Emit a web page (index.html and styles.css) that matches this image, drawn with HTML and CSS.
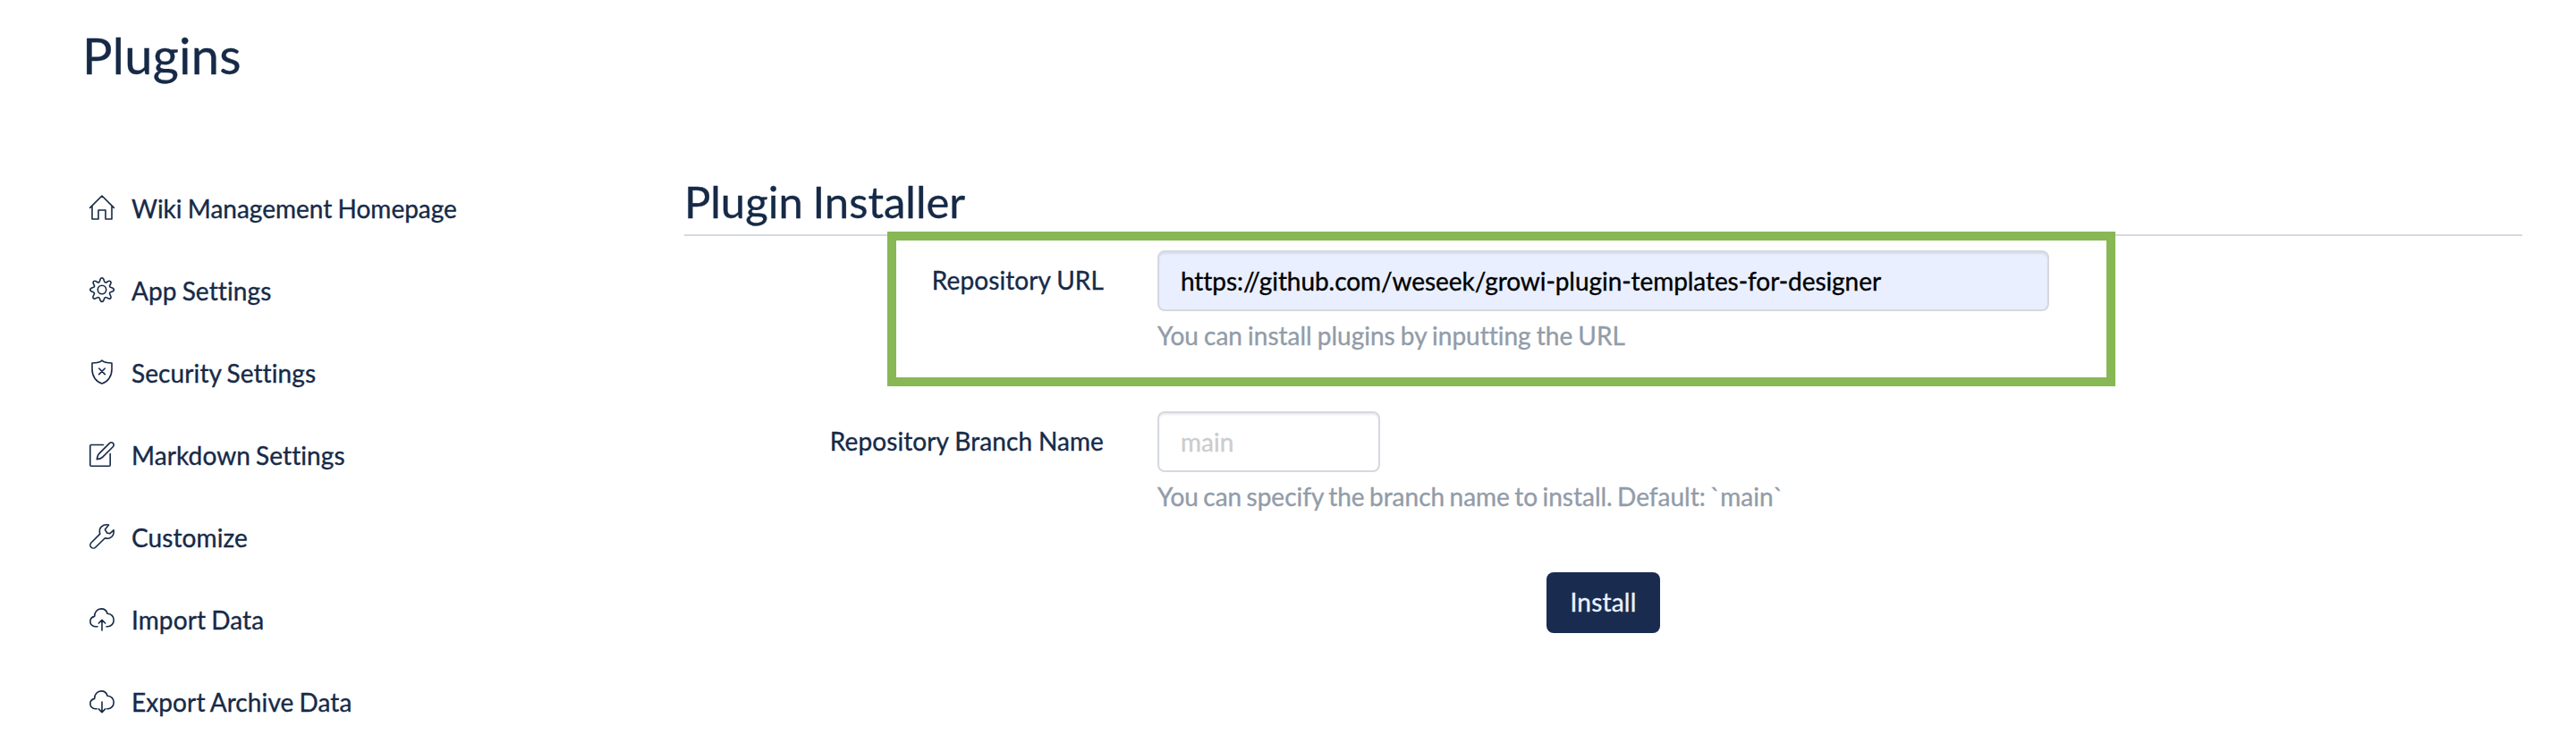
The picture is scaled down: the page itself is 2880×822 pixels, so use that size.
FILE: index.html
```html
<!DOCTYPE html>
<html lang="en">
<head>
<meta charset="utf-8">
<title>Plugins</title>
<link rel="stylesheet" href="styles.css">
</head>
<body>
<header class="page-header"><h1 class="page-title">Plugins</h1></header>
<div class="layout">
  <nav class="side-nav">
    <a class="nav-item nav-home"><svg class="icon" viewBox="0 0 28 28"><path d="M.6 14.4 14 1l13.4 13.4M3 12.5V27h7V17h8v10h7V12.5"/></svg><span>Wiki Management Homepage</span></a>
    <a class="nav-item"><svg class="icon" viewBox="0 0 28 28"><path d="M11.5 4.3C12 2 12.4.8 14 .8s2 1.200 2.500 3.500c.3 1.400 1.700 2 2.900 1.200 2-1.300 3.100-1.800 4.200-.7s.6 2.200-.7 4.200c-.8 1.200-.2 2.200 1.200 2.500 2.300.5 3.300.9 3.300 2.500s-1 2-3.300 2.500c-1.400.3-2 1.700-1.200 2.900 1.300 2 1.800 3.100.7 4.200s-2.200.6-4.200-.7c-1.200-.8-2.600-.2-2.900 1.200-.5 2.300-.9 3.300-2.500 3.300s-2-1-2.500-3.300c-.3-1.400-1.700-2-2.900-1.200-2 1.300-3.100 1.800-4.200.7s-.6-2.200.7-4.200c.8-1.200.2-2.600-1.200-2.900C1.800 16 .8 15.600.8 14s1-2 3.300-2.500c1.400-.3 2-1.300 1.200-2.500C4 7 3.500 5.900 4.600 4.800s2.200-.6 4.200.7c1.200.8 2.400.2 2.700-1.200z"/><circle cx="14" cy="14" r="4.700"/></svg><span>App Settings</span></a>
    <a class="nav-item"><svg class="icon" viewBox="0 0 28 28"><path d="M14 1C12 3.300 6.500 4 3 4v7c0 8 4.500 14 11 16 6.500-2 11-8 11-16V4c-3.500 0-9-.7-11-3zM10.700 10l6.600 6.600M17.300 10l-6.600 6.600"/></svg><span>Security Settings</span></a>
    <a class="nav-item"><svg class="icon" viewBox="0 0 28 28"><path d="M15.500 3.500H2a1.200 1.200 0 0 0-1.200 1.200V26A1.200 1.200 0 0 0 2 27.200h20a1.200 1.200 0 0 0 1.200-1.200V13.500M8.300 19.700c.4-2.600 1-4.900 2.200-6.100L22.200 1.900c1.400-1.400 3-1.400 4.200-.3 1.200 1.200 1.100 2.800-.2 4.100L14.500 17.400c-1.300 1.300-3.600 2-6.200 2.300z"/></svg><span>Markdown Settings</span></a>
    <a class="nav-item"><svg class="icon" viewBox="0 0 28 28"><path d="M21.500 1c-3-.5-6 .1-8.200 2.100-2 2-2.400 4.900-1.500 8L1.900 21a3.500 3.500 0 0 0 5 5l10.500-10.200c2.700.9 5.600.4 7.500-1.500 2-2 2.600-4.600 2.200-7.500l-4.200 3.900-3.200-.7-2.300-3.700z"/></svg><span>Customize</span></a>
    <a class="nav-item"><svg class="icon" viewBox="0 0 28 28"><path d="M9 22.800H6.500A5.700 5.700 0 0 1 .9 17c0-3 1.900-5 4.700-5.600C5.700 6.300 8.800 2.900 13.200 2.900c3.400 0 6 2 6.900 5.300 4.300.1 7.100 3.200 7.100 7.200s-3 7.400-7 7.400H19M14 27V15.500M10.300 19l3.700-3.700 3.700 3.700"/></svg><span>Import Data</span></a>
    <a class="nav-item"><svg class="icon" viewBox="0 0 28 28"><path d="M8.200 22.800H6.500A5.700 5.700 0 0 1 .9 17c0-3 1.900-5 4.700-5.600C5.700 6.300 8.800 2.900 13.200 2.900c3.400 0 6 2 6.900 5.300 4.300.1 7.100 3.200 7.100 7.200s-3 7.400-7 7.400h-.5M14 15v11.500M10.300 22.900l3.700 3.700 3.700-3.700"/></svg><span>Export Archive Data</span></a>
  </nav>
  <main class="content">
    <h2 class="section-title">Plugin Installer</h2>
    <form class="installer">
      <div class="form-row highlighted">
        <label class="label" for="url">Repository URL</label>
        <div class="field">
          <input class="input input-url" id="url" type="text" value="https://github.com/weseek/growi-plugin-templates-for-designer">
          <p class="help">You can install plugins by inputting the URL</p>
        </div>
      </div>
      <div class="form-row">
        <label class="label" for="branch">Repository Branch Name</label>
        <div class="field">
          <input class="input input-branch" id="branch" type="text" placeholder="main">
          <p class="help help-branch">You can specify the branch name to install. Default: `main`</p>
        </div>
      </div>
      <div class="actions"><button class="button" type="button">Install</button></div>
    </form>
  </main>
</div>
</body>
</html>
```
FILE: styles.css
```css
*, *::after { box-sizing: border-box; }

body {
  margin: 0;
  height: 822px;
  overflow: hidden;
  background: #fff;
  color: #162a47;
  font: 28px/42px Lato, sans-serif;
  font-variant-ligatures: none;
  -webkit-text-stroke: .35px currentColor;
}

.page-header { height: 187px; padding: 28px 92px 0; }

.page-title {
  margin: 0;
  font-size: 56px;
  font-weight: 400;
  line-height: 67px;
  letter-spacing: .25px;
}

.layout { display: flex; }

.side-nav { flex: none; width: 765px; padding-left: 100px; }

.nav-item {
  display: flex;
  align-items: flex-start;
  gap: 19px;
  padding: 25px 0;
  letter-spacing: .1px;
  word-spacing: -1.2px;
}

.nav-home { letter-spacing: 0; word-spacing: -.9px; }

.icon {
  flex: none;
  width: 28px;
  height: 28px;
  margin-top: 6px;
  overflow: visible;
  fill: none;
  stroke: #162a47;
  stroke-width: 1.6;
  stroke-linecap: round;
  stroke-linejoin: round;
}

.content { width: 2055px; padding-top: 10px; }

.section-title {
  height: 67px;
  margin: 0;
  border-bottom: 2px solid #d5d9df;
  font-size: 49px;
  font-weight: 400;
  line-height: 57px;
  word-spacing: -1.8px;
}

.form-row { position: relative; display: flex; gap: 60px; margin-top: 16px; height: 180px; }

.label { width: 469px; padding-top: 12px; text-align: right; letter-spacing: .1px; word-spacing: -.5px; }

.input {
  display: block;
  height: 68px;
  padding: 12px 24px;
  border: 2px solid #d5d9df;
  border-radius: 8px;
  box-shadow: inset 0 2px 2px rgba(0, 0, 0, .075);
  background: #fff;
  color: #000;
  font: inherit;
  font-variant-ligatures: none;
}

.input::placeholder { color: #ccc; opacity: 1; }
.input-url { width: 997px; background: #e9effe; letter-spacing: -.06px; }
.input-branch { width: 249px; }

.help { margin: 6px 0 0; color: #929ca8; word-spacing: -1.05px; }
.help-branch { font-variant-ligatures: normal; word-spacing: -1.8px; }

/* Callout frame drawn over the section rule */
.highlighted::after {
  content: "";
  position: absolute;
  top: -21px;
  left: 227px;
  width: 1373px;
  height: 173px;
  border: 10px solid #88b755;
  pointer-events: none;
}

.form-row + .form-row { margin-top: 0; }

.actions { padding-left: 964px; }

.button {
  display: block;
  width: 127px;
  height: 68px;
  padding: 0 0 2px;
  border: 0;
  border-radius: 8px;
  background: #192c50;
  color: #edf2fc;
  font: inherit;
  letter-spacing: .2px;
}
```
